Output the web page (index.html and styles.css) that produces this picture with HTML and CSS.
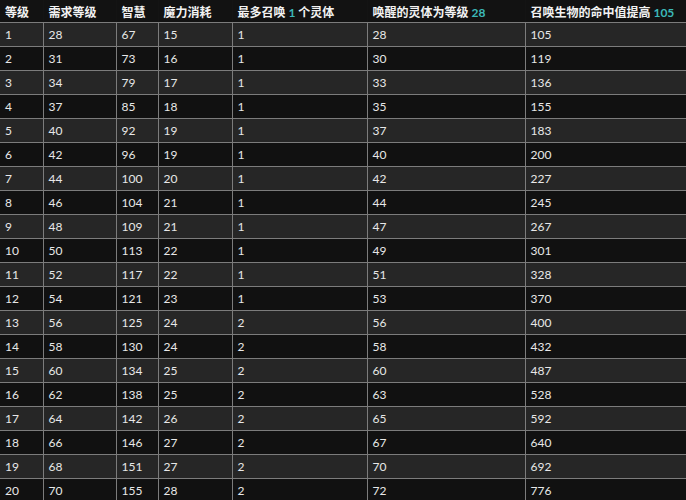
FILE: index.html
```html
<!DOCTYPE html>
<html lang="zh">
<head>
<meta charset="utf-8">
<link rel="stylesheet" href="styles.css">
</head>
<body>
<table class="tbl">
<colgroup>
<col class="c1"><col class="c2"><col class="c3"><col class="c4"><col class="c5"><col class="c6"><col class="c7">
</colgroup>
<thead>
<tr><th>等级</th><th>需求等级</th><th>智慧</th><th>魔力消耗</th><th>最多召唤 <span class="hl">1</span> 个灵体</th><th>唤醒的灵体为等级 <span class="hl">28</span></th><th>召唤生物的命中值提高 <span class="hl">105</span></th></tr>
</thead>
<tbody>
<tr><td>1</td><td>28</td><td>67</td><td>15</td><td>1</td><td>28</td><td>105</td></tr>
<tr><td>2</td><td>31</td><td>73</td><td>16</td><td>1</td><td>30</td><td>119</td></tr>
<tr><td>3</td><td>34</td><td>79</td><td>17</td><td>1</td><td>33</td><td>136</td></tr>
<tr><td>4</td><td>37</td><td>85</td><td>18</td><td>1</td><td>35</td><td>155</td></tr>
<tr><td>5</td><td>40</td><td>92</td><td>19</td><td>1</td><td>37</td><td>183</td></tr>
<tr><td>6</td><td>42</td><td>96</td><td>19</td><td>1</td><td>40</td><td>200</td></tr>
<tr><td>7</td><td>44</td><td>100</td><td>20</td><td>1</td><td>42</td><td>227</td></tr>
<tr><td>8</td><td>46</td><td>104</td><td>21</td><td>1</td><td>44</td><td>245</td></tr>
<tr><td>9</td><td>48</td><td>109</td><td>21</td><td>1</td><td>47</td><td>267</td></tr>
<tr><td>10</td><td>50</td><td>113</td><td>22</td><td>1</td><td>49</td><td>301</td></tr>
<tr><td>11</td><td>52</td><td>117</td><td>22</td><td>1</td><td>51</td><td>328</td></tr>
<tr><td>12</td><td>54</td><td>121</td><td>23</td><td>1</td><td>53</td><td>370</td></tr>
<tr><td>13</td><td>56</td><td>125</td><td>24</td><td>2</td><td>56</td><td>400</td></tr>
<tr><td>14</td><td>58</td><td>130</td><td>24</td><td>2</td><td>58</td><td>432</td></tr>
<tr><td>15</td><td>60</td><td>134</td><td>25</td><td>2</td><td>60</td><td>487</td></tr>
<tr><td>16</td><td>62</td><td>138</td><td>25</td><td>2</td><td>63</td><td>528</td></tr>
<tr><td>17</td><td>64</td><td>142</td><td>26</td><td>2</td><td>65</td><td>592</td></tr>
<tr><td>18</td><td>66</td><td>146</td><td>27</td><td>2</td><td>67</td><td>640</td></tr>
<tr><td>19</td><td>68</td><td>151</td><td>27</td><td>2</td><td>70</td><td>692</td></tr>
<tr><td>20</td><td>70</td><td>155</td><td>28</td><td>2</td><td>72</td><td>776</td></tr>
</tbody>
</table>
</body>
</html>
```
FILE: styles.css
```css
html, body {
  margin: 0;
  padding: 0;
  background: #111111;
  overflow: hidden;
}
.tbl {
  width: 686px;
  border-collapse: collapse;
  table-layout: fixed;
  font-family: Lato, "Noto Sans CJK SC", sans-serif;
  font-size: 12px;
  color: #e8e8e8;
}
.c1 { width: 43px; }
.c2 { width: 73px; }
.c3 { width: 42px; }
.c4 { width: 74px; }
.c5 { width: 135px; }
.c6 { width: 158px; }
.c7 { width: 161px; }
.tbl th, .tbl td {
  text-align: left;
  padding: 0 0 0 5px;
  white-space: nowrap;
  overflow: hidden;
}
.tbl th {
  height: 22px;
  font-weight: bold;
  color: #f2f2f2;
  background: #121212;
  border-left: 1px solid #141414;
}
.tbl td {
  height: 23px;
  border: 1px solid #7c7c7c;
  border-top: 0;
}
.tbl tr > *:first-child { border-left: 0; }
.tbl tr > *:last-child { border-right: 0; }
.tbl thead th { border-bottom: 1px solid #7c7c7c; }
.tbl tbody tr:nth-child(odd) td { background: #262626; }
.tbl tbody tr:nth-child(even) td { background: #111111; }
.hl { color: #3cb8b8; }
```
